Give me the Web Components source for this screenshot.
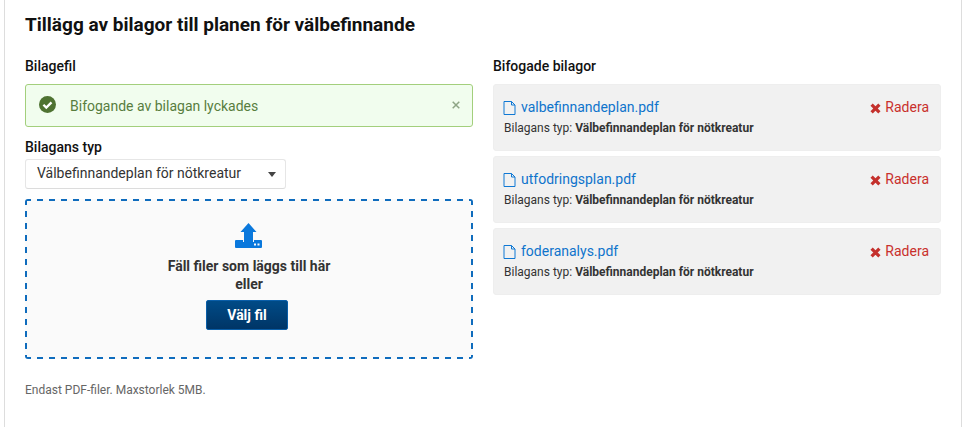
<!DOCTYPE html>
<html lang="sv">
<head>
<meta charset="utf-8">
<title>Bilagor</title>
<style>
    html, body { margin: 0; height: 100%; overflow: hidden; background: #fff; }
    body { font-family: Roboto, "Liberation Sans", sans-serif; color: #333; }
</style>
</head>
<body>
<attachment-panel heading="Tillägg av bilagor till planen för välbefinnande">
    <upload-form slot="left"></upload-form>
    <div slot="right">
        <attachment-card file="valbefinnandeplan.pdf" type="Välbefinnandeplan för nötkreatur"></attachment-card>
        <attachment-card file="utfodringsplan.pdf" type="Välbefinnandeplan för nötkreatur"></attachment-card>
        <attachment-card file="foderanalys.pdf" type="Välbefinnandeplan för nötkreatur"></attachment-card>
    </div>
</attachment-panel>

<script>
customElements.define('attachment-panel', class AttachmentPanel extends HTMLElement
{
    constructor()
    {
        super();
        this.attachShadow({ mode: 'open' });
    }

    connectedCallback()
    {
        const heading = this.getAttribute('heading') || '';

        this.shadowRoot.innerHTML = `
            <style>
                :host
                {
                    display: block;
                    box-sizing: border-box;
                    height: 427px;
                    margin: 0 3px 0 4px;
                    padding: 0 20px;
                    background: #fff;
                    border-left: 1px solid #ddd;
                    border-right: 1px solid #ddd;
                }
                h2
                {
                    margin: 0;
                    padding-top: 13px;
                    height: 31px;
                    font-size: 19px;
                    line-height: 24px;
                    font-weight: 700;
                    color: #111;
                }
                .cols
                {
                    display: grid;
                    grid-template-columns: 448px 448px;
                    column-gap: 20px;
                    margin-top: 13px;
                }
                h3
                {
                    margin: 0 0 9px;
                    font-size: 14px;
                    line-height: 18px;
                    font-weight: 500;
                    color: #111;
                }
            </style>
            <h2>${heading}</h2>
            <div class="cols">
                <section><h3>Bilagefil</h3><slot name="left"></slot></section>
                <section><h3>Bifogade bilagor</h3><slot name="right"></slot></section>
            </div>
        `;
    }
});

customElements.define('success-alert', class SuccessAlert extends HTMLElement
{
    constructor()
    {
        super();
        this.attachShadow({ mode: 'open' });
        this.shadowRoot.innerHTML = `
            <style>
                :host
                {
                    display: flex;
                    align-items: center;
                    box-sizing: border-box;
                    height: 43px;
                    padding: 0 12px 0 13px;
                    background: #f1fdee;
                    border: 1px solid #a3cf7c;
                    border-radius: 3px;
                    color: #587d3e;
                    font-size: 14px;
                }
                svg.ok { flex: none; width: 17px; height: 17px; margin: -2px 14px 0 0; }
                .msg { flex: 1; }
                svg.close { flex: none; width: 8px; height: 8px; margin-top: -2px; }
            </style>
            <svg class="ok" viewBox="0 0 17 17">
                <circle cx="8.5" cy="8.5" r="8.5" fill="#4f7332"/>
                <path d="M4.4 8.7l2.9 2.9 5.2-5.2" fill="none" stroke="#fff" stroke-width="2.3"/>
            </svg>
            <span class="msg"><slot></slot></span>
            <svg class="close" viewBox="0 0 8 8">
                <path d="M.7 .7l6.6 6.6M7.3 .7l-6.6 6.6" stroke="#8ea585" stroke-width="1.5" fill="none"/>
            </svg>
        `;
    }
});

customElements.define('type-select', class TypeSelect extends HTMLElement
{
    constructor()
    {
        super();
        this.attachShadow({ mode: 'open' });
        this.shadowRoot.innerHTML = `
            <style>
                :host
                {
                    display: flex;
                    align-items: center;
                    justify-content: space-between;
                    box-sizing: border-box;
                    width: 261px;
                    height: 30px;
                    padding: 0 9px 2px 11px;
                    background: #fff;
                    border: 1px solid #e6e6e6;
                    border-bottom-color: #dcdcdc;
                    border-radius: 3px;
                    color: #333;
                    font-size: 14px;
                }
                i
                {
                    width: 0;
                    height: 0;
                    margin-top: 2px;
                    border-left: 4px solid transparent;
                    border-right: 4px solid transparent;
                    border-top: 5px solid #444;
                }
            </style>
            <span><slot></slot></span><i></i>
        `;
    }
});

customElements.define('drop-zone', class DropZone extends HTMLElement
{
    constructor()
    {
        super();
        this.attachShadow({ mode: 'open' });
        this.shadowRoot.innerHTML = `
            <style>
                :host
                {
                    --dash-x: repeating-linear-gradient(90deg, #0f6cbd 0 6px, transparent 6px 12px);
                    --dash-y: repeating-linear-gradient(180deg, #0f6cbd 0 6px, transparent 6px 12px);
                    display: flex;
                    flex-direction: column;
                    align-items: center;
                    box-sizing: border-box;
                    height: 160px;
                    padding-top: 24px;
                    background:
                        var(--dash-x) top / 100% 2px no-repeat,
                        var(--dash-x) bottom / 100% 2px no-repeat,
                        var(--dash-y) left / 2px 100% no-repeat,
                        var(--dash-y) right / 2px 100% no-repeat,
                        #fafafa;
                    border-radius: 3px;
                    color: #333;
                    font-size: 14px;
                    font-weight: 700;
                    text-align: center;
                }
                svg { width: 27px; height: 25px; margin-bottom: 9px; flex: none; position: relative; left: -0.5px; }
                p { margin: 0; width: 190px; line-height: 18px; }
                button
                {
                    margin: 7px 0 0;
                    box-sizing: border-box;
                    width: 82px;
                    height: 30px;
                    padding: 0;
                    font: 700 14px Roboto, "Liberation Sans", sans-serif;
                    color: #fff;
                    background: linear-gradient(#004b87, #003566);
                    border: 1px solid #0a5ea8;
                    border-radius: 2px;
                    position: relative;
                    left: -2px;
                }
            </style>
            <svg viewBox="0 0 27 25">
                <path d="M13.5 0L21.5 9H18V17H9V9H5.5z" fill="#0a78dc"/>
                <path d="M0 18a1 1 0 0 1 1-1H8v2h11v-2h7a1 1 0 0 1 1 1V24a1 1 0 0 1-1 1H1a1 1 0 0 1-1-1z" fill="#0a78dc"/>
                <rect x="9" y="17" width="9" height="2" fill="#0a78dc"/>
                <rect x="19" y="20.5" width="2" height="2" fill="#fafafa"/>
                <rect x="22.5" y="20.5" width="2" height="2" fill="#fafafa"/>
            </svg>
            <p>Fäll filer som läggs till här<br>eller</p>
            <button type="button">Välj fil</button>
        `;
    }
});

customElements.define('upload-form', class UploadForm extends HTMLElement
{
    constructor()
    {
        super();
        this.attachShadow({ mode: 'open' });
        this.shadowRoot.innerHTML = `
            <style>
                :host { display: block; }
                label
                {
                    display: block;
                    margin: 12px 0 4px;
                    font-size: 14px;
                    line-height: 16px;
                    font-weight: 500;
                    color: #111;
                }
                drop-zone { margin-top: 10px; }
                small
                {
                    display: block;
                    margin-top: 23px;
                    font-size: 12px;
                    line-height: 16px;
                    color: #666;
                }
            </style>
            <success-alert>Bifogande av bilagan lyckades</success-alert>
            <label>Bilagans typ</label>
            <type-select>Välbefinnandeplan för nötkreatur</type-select>
            <drop-zone></drop-zone>
            <small>Endast PDF-filer. Maxstorlek 5MB.</small>
        `;
    }
});

customElements.define('attachment-card', class AttachmentCard extends HTMLElement
{
    constructor()
    {
        super();
        this.attachShadow({ mode: 'open' });
    }

    connectedCallback()
    {
        const file = this.getAttribute('file') || '';
        const type = this.getAttribute('type') || '';

        this.shadowRoot.innerHTML = `
            <style>
                :host
                {
                    display: block;
                    box-sizing: border-box;
                    height: 67px;
                    margin-bottom: 5px;
                    padding: 13px 11px 0 10px;
                    background: #f1f1f1;
                    border-radius: 3px;
                    border: 1px solid #eee;
                }
                .row { display: flex; align-items: center; justify-content: space-between; height: 18px; }
                a { display: flex; align-items: center; color: #0f74cc; font-size: 14px; }
                a svg { width: 13px; height: 14px; margin: 1px 5px 0 -1px; }
                .del { color: #c9302c; }
                .del svg { width: 11px; height: 11px; margin: 2px 4px 0 0; }
                p { margin: 4px 0 0; font-size: 12px; line-height: 16px; color: #333; }
                b { font-weight: 700; }
            </style>
            <div class="row">
                <a>
                    <svg viewBox="0 0 13 14">
                        <path d="M1 .5h7.5L12 4v9.5H1zM8.5 .5V4H12" fill="none" stroke="#0f78d4" stroke-width="1"/>
                    </svg>
                    ${file}
                </a>
                <a class="del">
                    <svg viewBox="0 0 11 11">
                        <path d="M1.6 1.6l7.8 7.8M9.4 1.6l-7.8 7.8" stroke="#c4302c" stroke-width="3.2" fill="none"/>
                    </svg>
                    Radera
                </a>
            </div>
            <p>Bilagans typ: <b>${type}</b></p>
        `;
    }
});
</script>
</body>
</html>
